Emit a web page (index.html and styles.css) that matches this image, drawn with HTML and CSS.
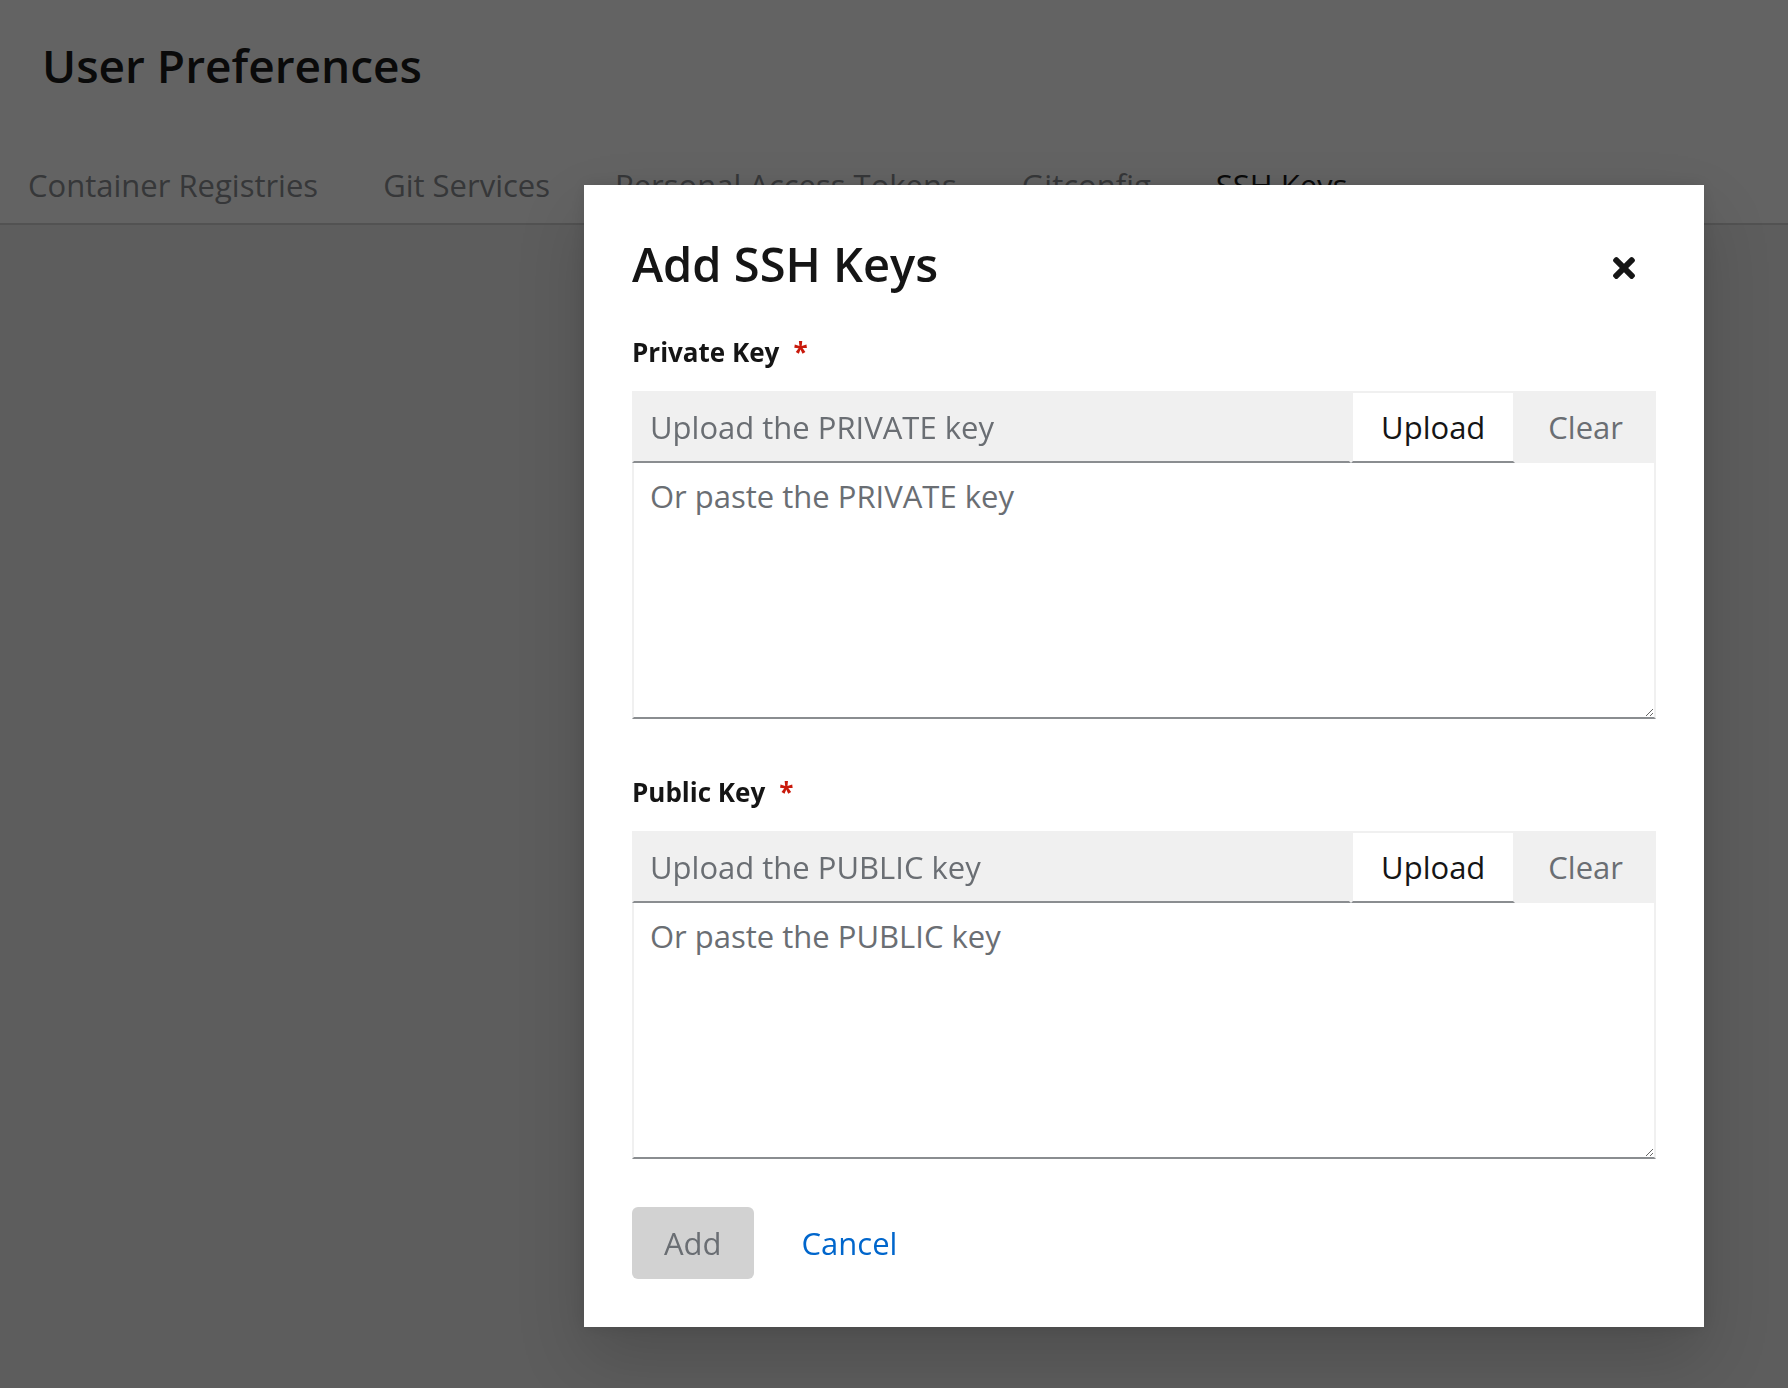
FILE: index.html
```html
<!DOCTYPE html>
<html lang="en">
<head>
<meta charset="utf-8">
<title>User Preferences</title>
<link rel="stylesheet" href="styles.css">
</head>
<body>
<div class="page">
  <header class="page-header">
    <h1 class="page-title">User Preferences</h1>
    <nav class="tabs">
      <span class="tab">Container Registries</span>
      <span class="tab">Git Services</span>
      <span class="tab">Personal Access Tokens</span>
      <span class="tab">Gitconfig</span>
      <span class="tab tab-current">SSH Keys</span>
    </nav>
  </header>
  <main class="page-body"></main>
</div>

<div class="backdrop"></div>

<div class="modal" role="dialog" aria-labelledby="modal-title">
  <div class="modal-header">
    <h2 class="modal-title" id="modal-title">Add SSH Keys</h2>
    <button class="close-btn" aria-label="Close">
      <svg viewBox="0 80 352 352" width="22" height="22" aria-hidden="true"><path fill="#151515" d="M242.72 256l100.07-100.07c12.28-12.28 12.28-32.19 0-44.48l-22.24-22.24c-12.28-12.28-32.19-12.28-44.48 0L176 189.28 75.93 89.21c-12.28-12.28-32.19-12.28-44.48 0L9.21 111.45c-12.28 12.28-12.28 32.19 0 44.48L109.28 256 9.21 356.07c-12.28 12.28-12.28 32.19 0 44.48l22.24 22.24c12.28 12.28 32.2 12.28 44.48 0L176 322.72l100.07 100.07c12.28 12.28 32.2 12.28 44.48 0l22.24-22.24c12.28-12.28 12.28-32.19 0-44.48L242.72 256z"/></svg>
    </button>
  </div>

  <div class="modal-body">
    <div class="form-group first">
      <label class="form-label">Private Key<span class="required">*</span></label>
      <div class="file-upload">
        <div class="input-group">
          <input class="file-input" type="text" readonly placeholder="Upload the PRIVATE key">
          <button class="control-btn upload">Upload</button>
          <button class="control-btn clear" disabled>Clear</button>
        </div>
        <textarea class="key-area" placeholder="Or paste the PRIVATE key"></textarea>
      </div>
    </div>

    <div class="form-group">
      <label class="form-label">Public Key<span class="required">*</span></label>
      <div class="file-upload">
        <div class="input-group">
          <input class="file-input" type="text" readonly placeholder="Upload the PUBLIC key">
          <button class="control-btn upload">Upload</button>
          <button class="control-btn clear" disabled>Clear</button>
        </div>
        <textarea class="key-area" placeholder="Or paste the PUBLIC key"></textarea>
      </div>
    </div>
  </div>

  <div class="modal-footer">
    <button class="btn-primary" disabled>Add</button>
    <button class="btn-link">Cancel</button>
  </div>
</div>
</body>
</html>
```

FILE: styles.css
```css
* { box-sizing: border-box; }

html, body {
  margin: 0;
  padding: 0;
  height: 100%;
}

body {
  font-family: "Open Sans", "Liberation Sans", sans-serif;
  color: #151515;
  background: #f0f0f0;
  overflow: hidden;
}

.page {
  min-height: 100%;
  display: flex;
  flex-direction: column;
}

.page-header {
  background: #ffffff;
  padding-top: 35px;
  border-bottom: 2px solid #d2d2d2;
}

.page-title {
  margin: 0;
  padding-left: 42px;
  font-size: 46px;
  line-height: 61px;
  font-weight: 600;
  color: #151515;
}

.tabs {
  display: flex;
  gap: 65px;
  padding-left: 28px;
  margin-top: 50px;
}

.tab {
  padding: 16px 0 15px;
  font-size: 31px;
  line-height: 46px;
  color: #8a8d90;
  white-space: nowrap;
}

.tab-current {
  color: #151515;
}

.page-body {
  flex: 1;
  background: #f0f0f0;
}

.backdrop {
  position: fixed;
  inset: 0;
  background: rgba(3, 3, 3, 0.62);
}

.modal {
  position: absolute;
  left: 584px;
  top: 185px;
  width: 1120px;
  background: #ffffff;
  padding: 48px;
  box-shadow: 0 32px 64px 0 rgba(3, 3, 3, 0.16), 0 0 16px 0 rgba(3, 3, 3, 0.1);
}

.modal-header {
  display: flex;
  justify-content: space-between;
  align-items: flex-start;
}

.modal-title {
  margin: 0;
  font-size: 47px;
  line-height: 62px;
  font-weight: 600;
  color: #151515;
}

.close-btn {
  margin: 24px 21px 0 0;
  padding: 0;
  border: 0;
  background: none;
  width: 22px;
  height: 22px;
  display: flex;
  cursor: pointer;
}

.close-btn svg { display: block; }

.form-group {
  margin-top: 54px;
}

.form-group.first {
  margin-top: 38px;
}

.form-label {
  display: block;
  font-size: 26px;
  line-height: 39px;
  font-weight: 700;
  padding-bottom: 19px;
  color: #151515;
}

.required {
  color: #c9190b;
  margin-left: 14px;
  font-weight: 700;
}

.file-upload {
  display: flex;
  flex-direction: column;
}

.input-group {
  display: flex;
  height: 72px;
}

.file-input {
  flex: 1;
  min-width: 0;
  height: 72px;
  margin: 0;
  padding: 0 16px;
  font-family: inherit;
  font-size: 31px;
  color: #151515;
  background: #f0f0f0;
  border: 2px solid #f0f0f0;
  border-bottom-color: #8a8d90;
  outline: none;
}

.file-input::placeholder,
.key-area::placeholder {
  color: #6a6e73;
  opacity: 1;
}

.control-btn {
  height: 72px;
  margin: 0;
  font-family: inherit;
  font-size: 31px;
  line-height: 46px;
  border: 2px solid #f0f0f0;
  white-space: nowrap;
}

.control-btn.upload {
  padding: 0 28px;
  background: #ffffff;
  color: #151515;
  border-bottom-color: #8a8d90;
}

.control-btn.clear {
  padding: 0 31px;
  background: #f0f0f0;
  color: #6a6e73;
}

.key-area {
  display: block;
  width: 100%;
  height: 256px;
  margin: 0;
  padding: 10px 16px;
  font-family: inherit;
  font-size: 31px;
  line-height: 46px;
  color: #151515;
  background: #ffffff;
  border: 2px solid #f0f0f0;
  border-top-width: 0;
  border-bottom-color: #8a8d90;
  resize: vertical;
  outline: none;
}

.modal-footer {
  display: flex;
  align-items: center;
  gap: 16px;
  margin-top: 48px;
}

.btn-primary {
  height: 72px;
  padding: 0 32px;
  font-family: inherit;
  font-size: 31px;
  line-height: 46px;
  border: 0;
  border-radius: 6px;
  background: #d2d2d2;
  color: #6a6e73;
}

.btn-link {
  height: 72px;
  padding: 0 32px;
  font-family: inherit;
  font-size: 31px;
  line-height: 46px;
  border: 0;
  background: none;
  color: #0066cc;
  cursor: pointer;
}
```
